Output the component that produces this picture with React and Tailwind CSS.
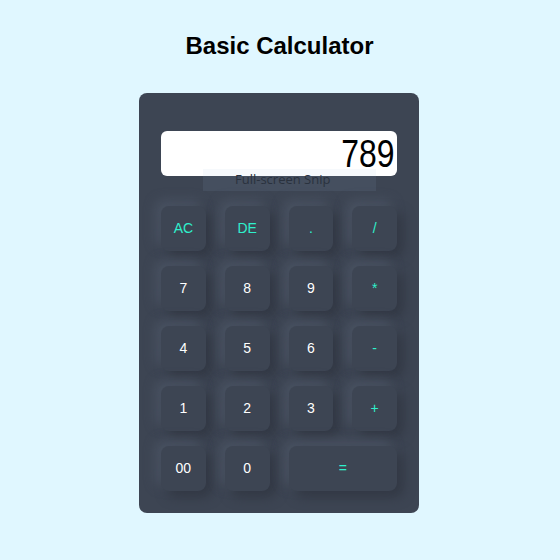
import React from "react";

const keys = [
  { label: "AC", accent: true },
  { label: "DE", accent: true },
  { label: ".", accent: true },
  { label: "/", accent: true },
  { label: "7" },
  { label: "8" },
  { label: "9" },
  { label: "*", accent: true },
  { label: "4" },
  { label: "5" },
  { label: "6" },
  { label: "-", accent: true },
  { label: "1" },
  { label: "2" },
  { label: "3" },
  { label: "+", accent: true },
  { label: "00" },
  { label: "0" },
  { label: "=", accent: true, wide: true },
];

const App = () => {
  const [value, setValue] = React.useState("789");

  const press = (k) => {
    if (k === "AC") return setValue("");
    if (k === "DE") return setValue((v) => v.slice(0, -1));
    if (k === "=") {
      try {
        // eslint-disable-next-line no-eval
        setValue(String(eval(value)));
      } catch {
        setValue("Error");
      }
      return;
    }
    setValue((v) => v + k);
  };

  return (
    <div
      className="min-h-[560px] w-full bg-[#e0f7ff] flex flex-col items-center"
      style={{ fontFamily: '"Liberation Sans", Arial, sans-serif' }}
    >
      <h1 className="mt-[32px] mr-[1px] text-[24px] font-bold text-black leading-[28px]">
        Basic Calculator
      </h1>

      {/* Calculator body */}
      <div className="relative mt-[33px] mr-[2px] w-[280px] h-[420px] rounded-lg bg-[#3d4553] px-[22px] pt-[38px]">
        <div className="h-[45px] w-[236px] rounded-md bg-white flex items-center justify-end overflow-visible">
          <span className="text-[38px] leading-none text-black mr-[3px] mt-[1px] scale-x-[0.84] origin-right">
            {value}
          </span>
        </div>

        {/* Snip tooltip leftover */}
        <div
          className="absolute left-[64px] top-[76px] w-[173px] h-[22px] bg-[rgba(160,190,220,0.09)] flex items-center pl-[32px] text-[13px] text-[#2a323e]"
          style={{ fontFamily: '"Open Sans", "Noto Sans", sans-serif' }}
        >
          Full-screen Snip
        </div>

        <div className="mt-[30px] grid grid-cols-4 gap-x-[19px] gap-y-[15px]">
          {keys.map((k) => (
            <button
              key={k.label}
              onClick={() => press(k.label)}
              className={`h-[45px] rounded-lg bg-[#3d4553] text-[14px] shadow-[6px_6px_12px_#323844,-5px_-5px_12px_#4b5464] ${
                k.accent ? "text-[#2ff0cc]" : "text-white"
              } ${k.wide ? "col-span-2" : ""}`}
            >
              {k.label}
            </button>
          ))}
        </div>
      </div>
    </div>
  );
};

export default App;
